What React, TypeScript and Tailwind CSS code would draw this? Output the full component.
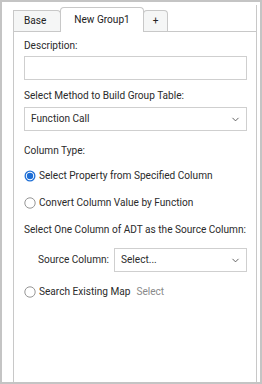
import { ChevronDown } from "lucide-react";

function Radio({ checked }: { checked?: boolean }) {
  return (
    <svg width="12" height="12" viewBox="0 0 12 12" className="shrink-0">
      {checked ? (
        <>
          <circle cx="6" cy="6" r="5.5" fill="#1f6fd6" />
          <circle cx="6" cy="6" r="4.2" fill="#ffffff" />
          <circle cx="6" cy="6" r="3.2" fill="#1f6fd6" />
        </>
      ) : (
        <circle cx="6" cy="6" r="5.2" fill="#ffffff" stroke="#8a8a8a" strokeWidth="0.9" />
      )}
    </svg>
  );
}

function Select({ value, className }: { value: string; className?: string }) {
  return (
    <div
      className={
        "flex h-[24px] items-center justify-between border border-[#cfcfcf] bg-white pl-[6px] pr-[5px] " +
        (className ?? "")
      }
    >
      <span>{value}</span>
      <ChevronDown size={11} strokeWidth={2} className="text-[#555]" />
    </div>
  );
}

export default function App() {
  return (
    <div className="flex h-[384px] w-[262px] border-2 border-[#c4c4c4] bg-white font-['Roboto',sans-serif] text-[10.1px] leading-[16px] text-[#2b2b2b]">
      <div className="ml-[11px] mr-[3px] mt-[3px] flex flex-1 flex-col border-r border-[#c8c8c8]">
        {/* tabs */}
        <div className="flex h-[26px] items-end">
          <div className="flex h-[21px] w-[48px] items-center rounded-tr-[4px] border-l border-r border-t border-[#c8c8c8] bg-[#f5f6f6] pl-[10px] text-[#222]">
            Base
          </div>
          <div className="relative z-10 -mb-px -ml-px flex h-[25px] w-[84px] items-start justify-center rounded-t-[4px] border-l border-r border-t border-[#c8c8c8] bg-white pt-[4px] text-[#222]">
            New Group1
          </div>
          <div className="-ml-px flex h-[21px] w-[25px] items-center justify-center rounded-t-[4px] border-l border-r border-t border-[#c8c8c8] bg-[#f5f6f6] text-[#222]">
            +
          </div>
        </div>

        {/* panel */}
        <div className="flex flex-1 flex-col border-l border-t border-[#c8c8c8] pl-[10px] pr-[9px] pt-[6px]">
          <div>Description:</div>
          <div className="mt-[2px] h-[24px] border border-[#cfcfcf]" />

          <div className="mt-[8px]">Select Method to Build Group Table:</div>
          <Select value="Function Call" className="mt-[3px]" />

          <div className="mt-[12px]">Column Type:</div>
          <div className="mt-[9px] flex items-center gap-[3px]">
            <Radio checked />
            <span>Select Property from Specified Column</span>
          </div>
          <div className="mt-[11px] flex items-center gap-[3px]">
            <Radio />
            <span>Convert Column Value by Function</span>
          </div>

          <div className="mt-[11px]">Select One Column of ADT as the Source Column:</div>
          <div className="mt-[10px] flex items-center pl-[14px]">
            <span className="mr-[5px]">Source Column:</span>
            <Select value="Select..." className="flex-1" />
          </div>
          <div className="mt-[12px] flex items-center gap-[3px]">
            <Radio />
            <span>Search Existing Map</span>
            <span className="ml-[3px] text-[#8a8a8a]">Select</span>
          </div>
        </div>
      </div>
    </div>
  );
}
